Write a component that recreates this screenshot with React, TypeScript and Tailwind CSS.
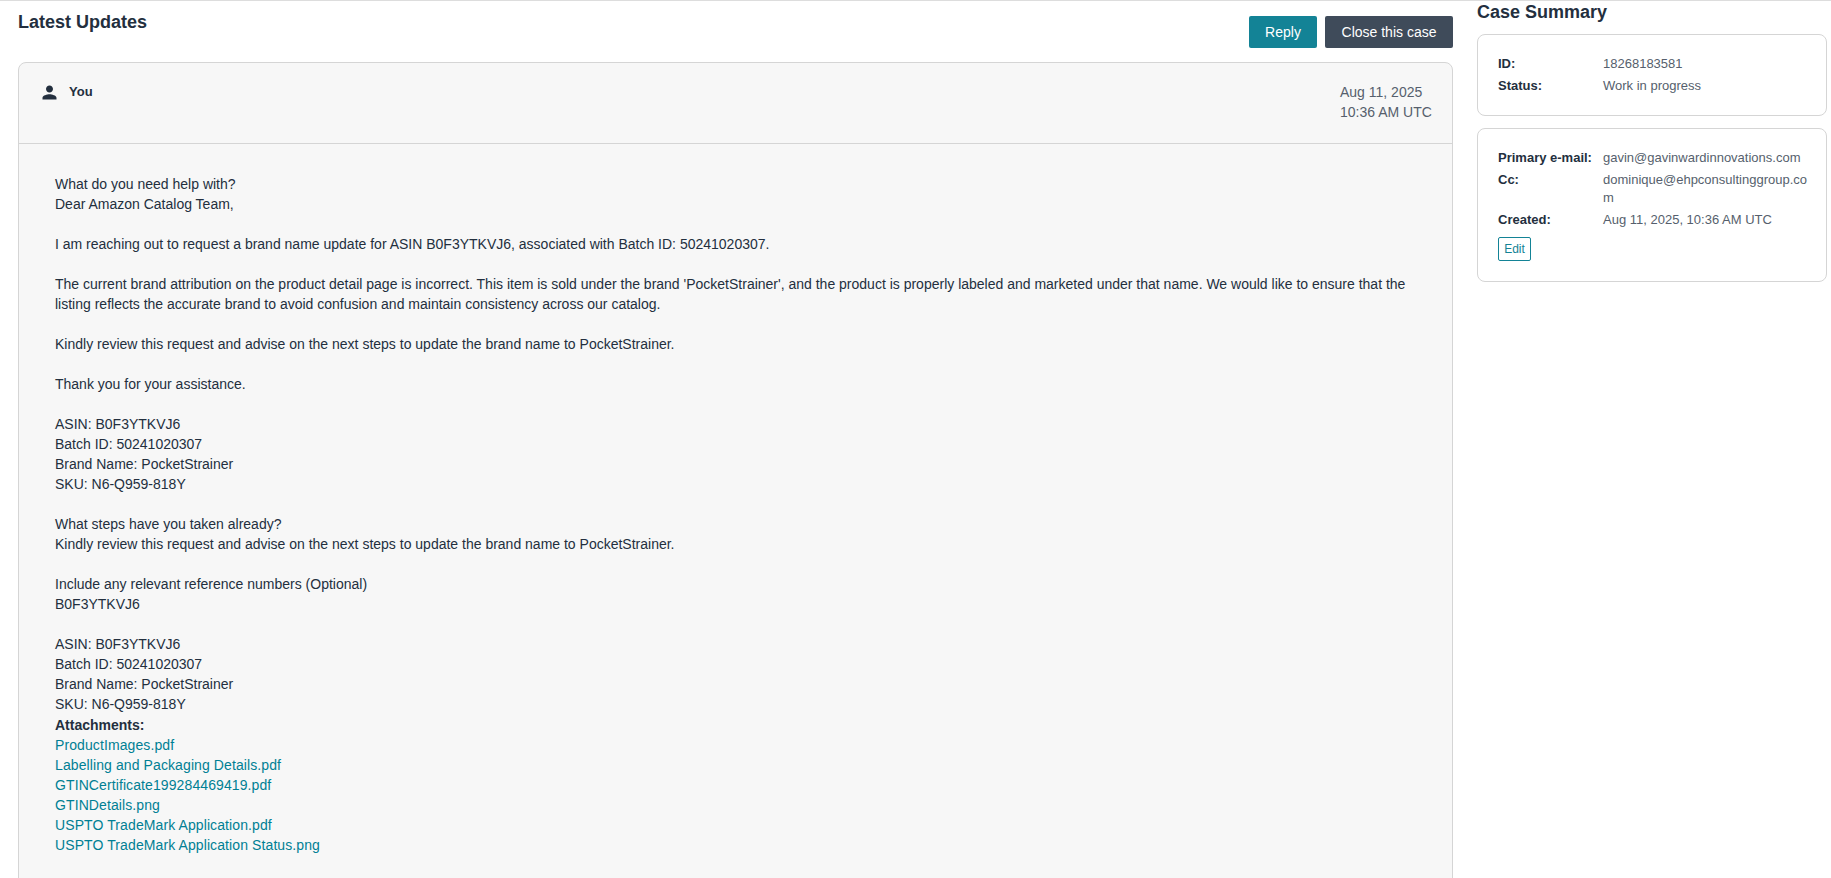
import React from "react";
import { MdPerson } from "react-icons/md";

const message = [
  ["What do you need help with?", "Dear Amazon Catalog Team,"],
  ["I am reaching out to request a brand name update for ASIN B0F3YTKVJ6, associated with Batch ID: 50241020307."],
  ["The current brand attribution on the product detail page is incorrect. This item is sold under the brand 'PocketStrainer', and the product is properly labeled and marketed under that name. We would like to ensure that the listing reflects the accurate brand to avoid confusion and maintain consistency across our catalog."],
  ["Kindly review this request and advise on the next steps to update the brand name to PocketStrainer."],
  ["Thank you for your assistance."],
  ["ASIN: B0F3YTKVJ6", "Batch ID: 50241020307", "Brand Name: PocketStrainer", "SKU: N6-Q959-818Y"],
  ["What steps have you taken already?", "Kindly review this request and advise on the next steps to update the brand name to PocketStrainer."],
  ["Include any relevant reference numbers (Optional)", "B0F3YTKVJ6"],
  ["ASIN: B0F3YTKVJ6", "Batch ID: 50241020307", "Brand Name: PocketStrainer", "SKU: N6-Q959-818Y"],
];

const attachments = [
  "ProductImages.pdf",
  "Labelling and Packaging Details.pdf",
  "GTINCertificate199284469419.pdf",
  "GTINDetails.png",
  "USPTO TradeMark Application.pdf",
  "USPTO TradeMark Application Status.png",
];

const SummaryRow = ({ label, children }: { label: string; children: React.ReactNode }) => (
  <div className="flex pb-1">
    <div className="w-[105px] shrink-0 font-bold text-[#232f3e]">{label}</div>
    <div className="w-[208px] break-all text-[#565f6d]">{children}</div>
  </div>
);

export default function App() {
  return (
    <div className="h-screen overflow-hidden border-t border-[#dddddd] bg-white font-['Liberation_Sans',Arial,sans-serif] text-[14px] leading-5 text-[#232f3e]">
      <div className="flex gap-6 pl-[18px]">
        <div className="w-[1435px] shrink-0">
          <div className="flex h-[61px] items-start justify-between">
            <h2 className="pt-[10px] text-[18px] leading-[22px] font-bold">Latest Updates</h2>
            <div className="flex gap-2 pt-[15px]">
              <button className="h-8 w-[68px] rounded-[2px] bg-[#138396] text-white">Reply</button>
              <button className="h-8 w-[128px] rounded-[2px] bg-[#3f4b5a] text-white">Close this case</button>
            </div>
          </div>

          <div className="rounded-t-lg border border-[#d5d5d5] bg-[#f7f7f7]">
            <div className="flex h-[81px] justify-between border-b border-[#d5d5d5] pt-5 pr-[20px] pl-[20px]">
              <div className="flex items-start gap-[9px]">
                <MdPerson className="-mt-[1px] text-[21px]" />
                <span className="text-[13px] leading-[18px] font-bold">You</span>
              </div>
              <div className="-mt-[1px] w-[92px] text-[#565f6d]">
                Aug 11, 2025
                <br />
                10:36 AM UTC
              </div>
            </div>

            <div className="px-[36px] pt-[30px] pb-10">
              <div className="flex flex-col gap-5">
                {message.map((block, i) => (
                  <p key={i}>
                    {block.map((line, j) => (
                      <span key={j} className="block">
                        {line}
                      </span>
                    ))}
                  </p>
                ))}
              </div>
              <div className="mt-[1px] font-bold">Attachments:</div>
              {attachments.map((name) => (
                <a key={name} href="#" className="block tracking-[0.1px] text-[#007f94]">
                  {name}
                </a>
              ))}
            </div>
          </div>
        </div>

        <div className="w-[350px] shrink-0 text-[13px] leading-[18px]">
          <h3 className="h-[33px] text-[18px] leading-[22px] font-bold">Case Summary</h3>
          <div className="rounded-lg border border-[#d5d5d5] px-5 pt-5 pb-4">
            <SummaryRow label="ID:">18268183581</SummaryRow>
            <SummaryRow label="Status:">Work in progress</SummaryRow>
          </div>
          <div className="mt-3 rounded-lg border border-[#d5d5d5] pt-5 pr-3 pb-5 pl-5">
            <SummaryRow label="Primary e-mail:">gavin@gavinwardinnovations.com</SummaryRow>
            <SummaryRow label="Cc:">dominique@ehpconsultinggroup.com</SummaryRow>
            <SummaryRow label="Created:">Aug 11, 2025, 10:36 AM UTC</SummaryRow>
            <button className="mt-1 block h-6 w-[33px] rounded-[2px] border border-[#138396] text-center text-[12px] leading-[18px] text-[#138396]">
              Edit
            </button>
          </div>
        </div>
      </div>
    </div>
  );
}
